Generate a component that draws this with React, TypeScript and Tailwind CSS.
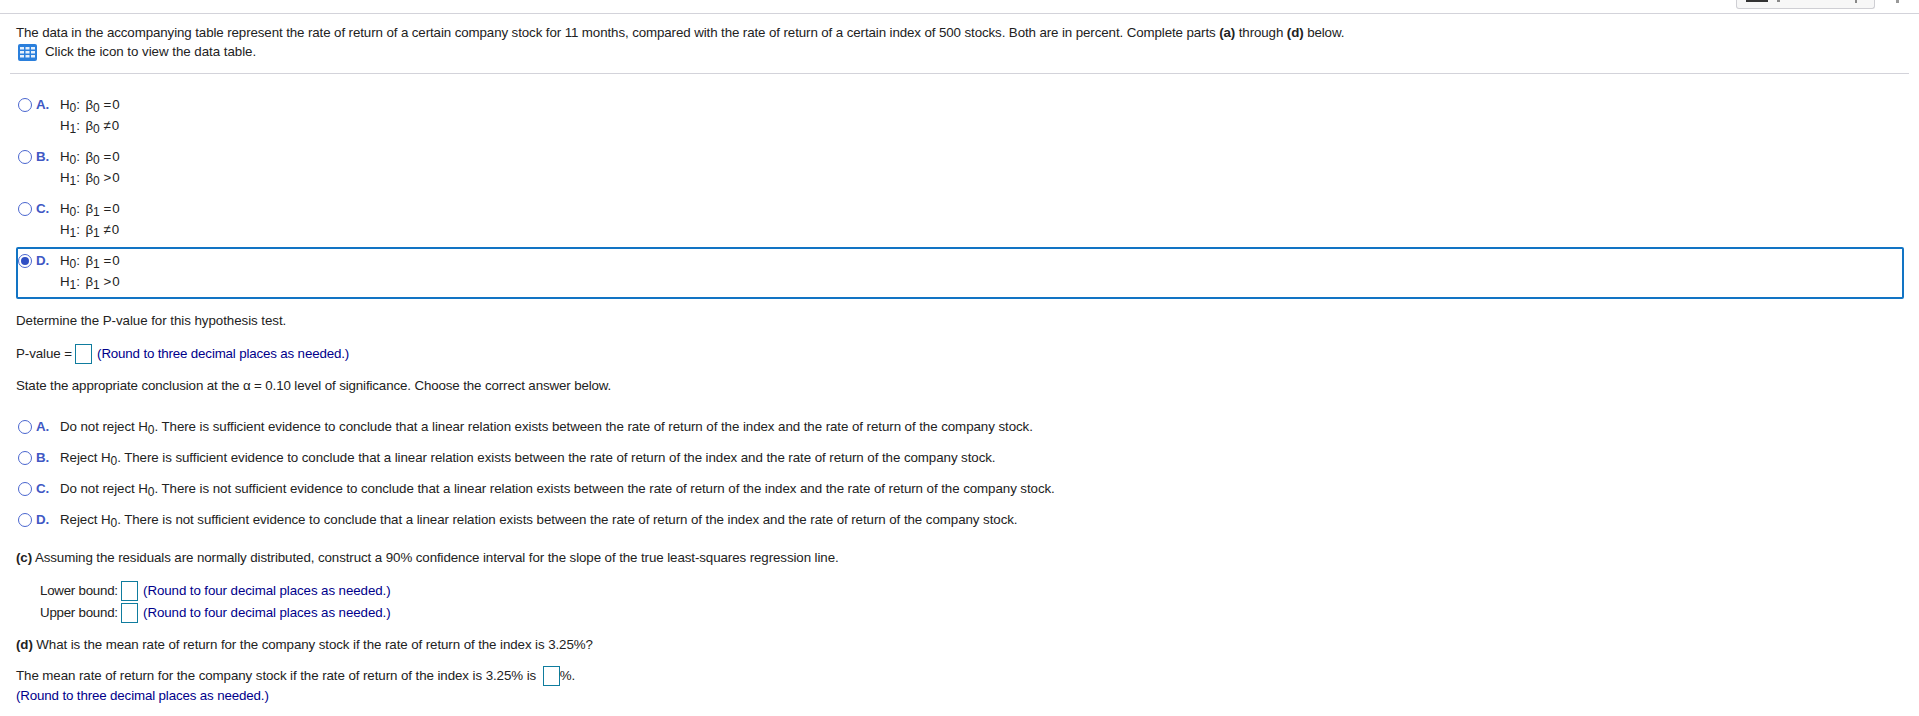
const needed = "text-[#00008b]";

function Sub({ children }: { children: React.ReactNode }) {
  return <sub className="static text-[12px] leading-none align-[-3px]">{children}</sub>;
}

function Radio({ checked }: { checked?: boolean }) {
  return (
    <span className="w-[14px] h-[14px] rounded-full border border-[#4a66cf] bg-white flex items-center justify-center shrink-0">
      {checked && <span className="w-[8px] h-[8px] rounded-full bg-[#2f4fc4]" />}
    </span>
  );
}

function Blank() {
  return <span className="inline-block w-[17px] h-[20px] border border-[#0f7c9e] bg-white align-middle" />;
}

function Beta({ n, rel, h }: { n: number; rel: string; h: number }) {
  return (
    <div className="h-[21px] leading-[21px] whitespace-nowrap">
      H<Sub>{h}</Sub>: <span className="ml-[2px]">β</span><Sub>{n}</Sub>
      <span className="ml-[4px] mr-[1px]">{rel}</span>0
    </div>
  );
}

function HypOption({ letter, n, rel, checked }: { letter: string; n: number; rel: string; checked?: boolean }) {
  return (
    <div className={`h-[52px] flex items-start pt-[1px] rounded-[2px] border-[2px] ${checked ? "border-[#1274c4]" : "border-transparent"}`}>
      <div className="h-[21px] flex items-center">
        <Radio checked={checked} />
      </div>
      <span className="w-[28px] pl-[4px] leading-[21px] font-bold text-[#4058c4] shrink-0">{letter}.</span>
      <div>
        <Beta h={0} n={n} rel="=" />
        <Beta h={1} n={n} rel={rel} />
      </div>
    </div>
  );
}

function Conclusion({ letter, lead, rest }: { letter: string; lead: string; rest: string }) {
  return (
    <div className="h-[31px] flex items-center pl-[2px]">
      <Radio />
      <span className="w-[28px] pl-[4px] font-bold text-[#4058c4] shrink-0">{letter}.</span>
      <span className="whitespace-nowrap tracking-[-0.07px]">
        {lead} H<Sub>0</Sub>. {rest}
      </span>
    </div>
  );
}

const relation = "a linear relation exists between the rate of return of the index and the rate of return of the company stock.";

export default function App() {
  return (
    <div className="w-[1919px] h-[716px] overflow-hidden bg-white text-[13.33px] tracking-[-0.09px] text-[#222] font-['Liberation_Sans',Arial,sans-serif]">
      <div className="h-[14px] border-b border-[#d3d3da] flex justify-end items-start pr-[20px]">
        <div className="w-[139px] h-[9px] border border-t-0 border-[#cfcfd4] rounded-b-[3px] bg-[#f7f7f7] relative">
          <span className="absolute left-[9px] top-0 w-[22px] h-[2px] bg-[#333]" />
          <span className="absolute left-[40px] top-0 w-[3px] h-[2px] bg-[#888]" />
          <span className="absolute left-[118px] top-0 w-[2px] h-[3px] bg-[#888]" />
        </div>
        <span className="ml-[21px] w-[3px] h-[3px] bg-[#999]" />
      </div>

      <div className="mx-[10px] w-[1899px] h-[60px] border-b border-[#d3d3da] px-[6px] pt-[9px]">
        <div className="h-[19px] leading-[19px] whitespace-nowrap tracking-[-0.105px]">
          The data in the accompanying table represent the rate of return of a certain company stock for 11 months, compared with the rate of return of a certain index of 500 stocks. Both are in percent. Complete parts <b>(a)</b> through <b>(d)</b> below.
        </div>
        <div className="h-[19px] flex items-center">
          <svg width="20" height="17" viewBox="0 0 20 17" className="ml-[2px] mt-[2px] shrink-0">
            <rect width="19" height="17" rx="2" fill="#2a7fdc" />
            <g fill="#e6f0fb">
              <rect x="2" y="3" width="4" height="2.5" /><rect x="7.5" y="3" width="4" height="2.5" /><rect x="13" y="3" width="4" height="2.5" />
              <rect x="2" y="7" width="4" height="2.5" /><rect x="7.5" y="7" width="4" height="2.5" /><rect x="13" y="7" width="4" height="2.5" />
              <rect x="2" y="11" width="4" height="2.5" /><rect x="7.5" y="11" width="4" height="2.5" /><rect x="13" y="11" width="4" height="2.5" />
            </g>
          </svg>
          <span className="ml-[7px] tracking-[-0.04px]">Click the icon to view the data table.</span>
        </div>
      </div>

      <div className="mx-[16px] w-[1888px] pt-[17px]">
        <HypOption letter="A" n={0} rel="≠" />
        <HypOption letter="B" n={0} rel=">" />
        <HypOption letter="C" n={1} rel="≠" />
        <HypOption letter="D" n={1} rel=">" checked />

        <div className="mt-[12px] h-[20px] leading-[20px] tracking-[-0.05px]">Determine the P-value for this hypothesis test.</div>
        <div className="mt-[13px] h-[20px] leading-[20px] whitespace-nowrap">
          P-value = <Blank /> <span className={`ml-[1px] ${needed} tracking-[-0.16px]`}>(Round to three decimal places as needed.)</span>
        </div>
        <div className="mt-[12px] h-[20px] leading-[20px] whitespace-nowrap tracking-[-0.125px]">
          State the appropriate conclusion at the α = 0.10 level of significance. Choose the correct answer below.
        </div>

        <div className="mt-[15px]">
          <Conclusion letter="A" lead="Do not reject" rest={`There is sufficient evidence to conclude that ${relation}`} />
          <Conclusion letter="B" lead="Reject" rest={`There is sufficient evidence to conclude that ${relation}`} />
          <Conclusion letter="C" lead="Do not reject" rest={`There is not sufficient evidence to conclude that ${relation}`} />
          <Conclusion letter="D" lead="Reject" rest={`There is not sufficient evidence to conclude that ${relation}`} />
        </div>

        <div className="mt-[13px] h-[20px] leading-[20px] whitespace-nowrap">
          <b>(c)</b> Assuming the residuals are normally distributed, construct a 90% confidence interval for the slope of the true least-squares regression line.
        </div>

        <div className="mt-[12px] pl-[24px]">
          <div className="h-[22px] leading-[22px] whitespace-nowrap">
            <span className="tracking-[-0.25px]">Lower bound:</span> <Blank /> <span className={`ml-[1px] ${needed}`}>(Round to four decimal places as needed.)</span>
          </div>
          <div className="h-[22px] leading-[22px] whitespace-nowrap">
            <span className="tracking-[-0.25px]">Upper bound:</span> <Blank /> <span className={`ml-[1px] ${needed}`}>(Round to four decimal places as needed.)</span>
          </div>
        </div>

        <div className="mt-[11px] h-[20px] leading-[20px] whitespace-nowrap">
          <b>(d)</b> What is the mean rate of return for the company stock if the rate of return of the index is 3.25%?
        </div>
        <div className="mt-[11px] h-[20px] leading-[20px] whitespace-nowrap tracking-[-0.08px]">
          The mean rate of return for the company stock if the rate of return of the index is 3.25% is <span className="ml-[3px]"><Blank /></span>%.
        </div>
        <div className={`h-[19px] leading-[19px] ${needed} tracking-[-0.14px]`}>(Round to three decimal places as needed.)</div>
      </div>
    </div>
  );
}
